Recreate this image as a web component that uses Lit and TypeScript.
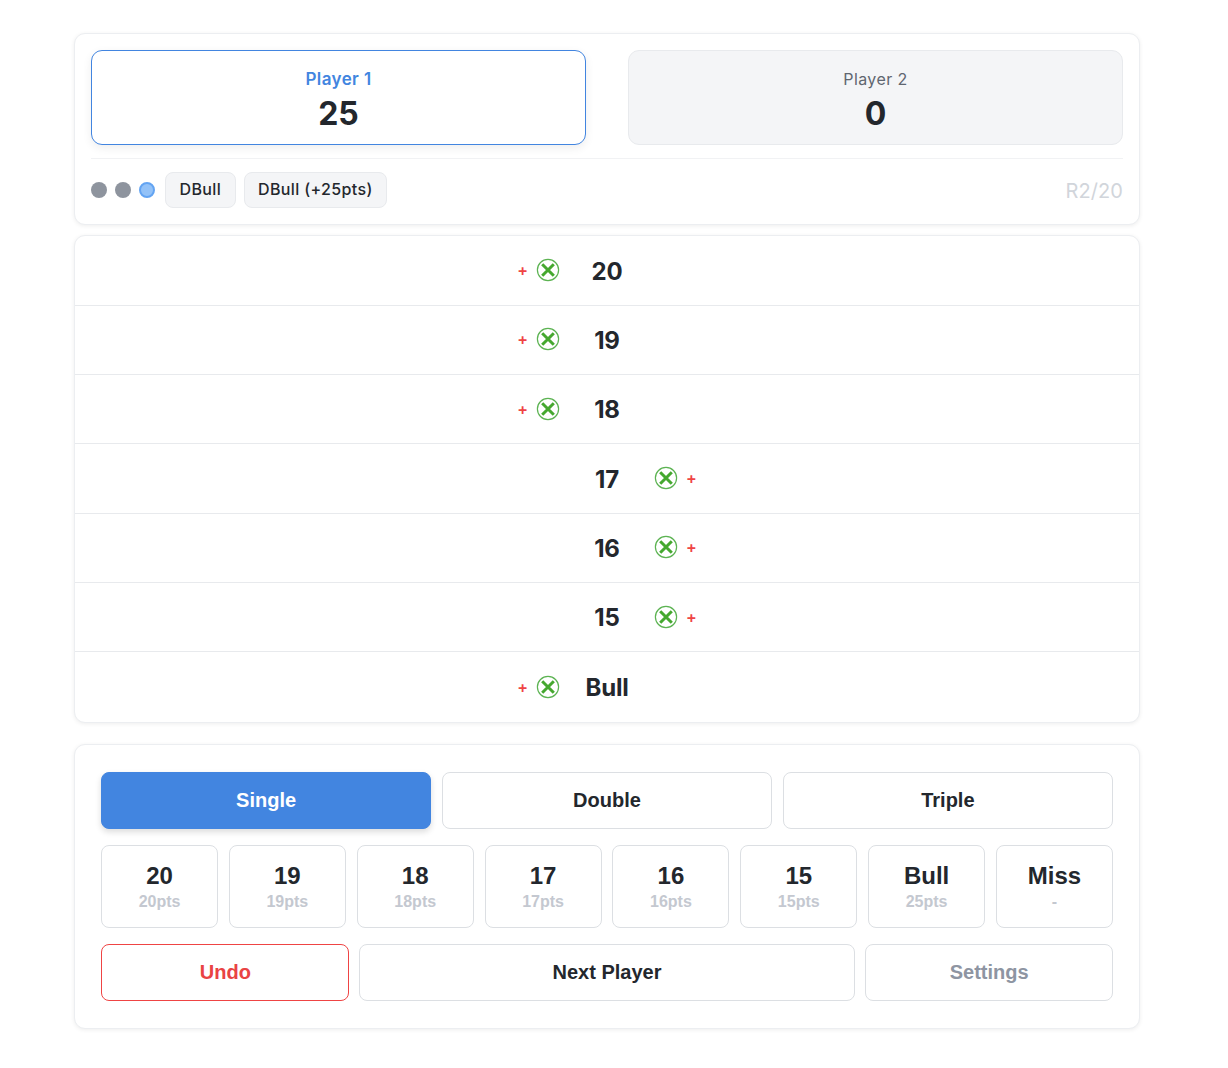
import { LitElement, html, css } from 'lit';
import { customElement } from 'lit/decorators.js';

const TARGETS = ['20', '19', '18', '17', '16', '15', 'Bull'];
// which side of the number the marks sit on
const LEFT_SIDE = ['20', '19', '18', 'Bull'];

const NUMBERS = [
  ['20', '20pts'],
  ['19', '19pts'],
  ['18', '18pts'],
  ['17', '17pts'],
  ['16', '16pts'],
  ['15', '15pts'],
  ['Bull', '25pts'],
  ['Miss', '-'],
];

const closedMark = html`
  <svg class="mark" viewBox="0 0 24 24" width="24" height="24">
    <circle cx="12" cy="12" r="10.6" fill="none" stroke="#5cb352" stroke-width="1.2"></circle>
    <path d="M6.2 6.2L17.8 17.8M17.8 6.2L6.2 17.8" fill="none" stroke="#45a82f" stroke-width="3"></path>
  </svg>
`;

@customElement('app-root')
export class AppRoot extends LitElement {
  static styles = css`
    :host {
      display: block;
      background: #fff;
      min-height: 1068px;
      box-sizing: border-box;
      padding: 33px 0 0 74px;
      font-family: Inter, 'Liberation Sans', sans-serif;
      color: #23272d;
    }
    .wrap {
      width: 1066px;
    }
    .card {
      box-sizing: border-box;
      background: #fff;
      border: 1px solid #eceef1;
      border-radius: 11px;
      box-shadow: 0 1px 4px rgba(0, 0, 0, 0.07);
    }
    .score-card {
      height: 192px;
      padding: 16px;
    }
    .players {
      display: grid;
      grid-template-columns: 1fr 1fr;
      column-gap: 42px;
      padding-bottom: 13px;
      border-bottom: 1px solid #f1f2f4;
    }
    .player {
      box-sizing: border-box;
      height: 95px;
      border: 1px solid #e8eaed;
      border-radius: 11px;
      background: #f4f5f7;
      display: flex;
      flex-direction: column;
      align-items: center;
      padding-top: 18px;
    }
    .player.active {
      background: #fff;
      border-color: #4285e0;
      box-shadow: 0 3px 10px rgba(0, 0, 0, 0.07);
    }
    .player .name {
      font-size: 16px;
      line-height: 20px;
      letter-spacing: 0.4px;
      color: #5f6670;
    }
    .player.active .name {
      color: #4285e0;
      font-size: 17px;
      font-weight: 600;
      line-height: 21px;
    }
    .player .score {
      font-size: 32px;
      line-height: 38px;
      font-weight: 700;
      color: #23272d;
      margin-top: 6px;
    }
    .player.active .score {
      margin-top: 5px;
    }
    .turn {
      display: flex;
      align-items: center;
      height: 36px;
      margin-top: 13px;
    }
    .dot {
      width: 16px;
      height: 16px;
      border-radius: 50%;
      background: #8e949e;
      margin-right: 8px;
    }
    .dot.current {
      box-sizing: border-box;
      background: #93c2f8;
      border: 2px solid #63a4f2;
      margin-right: 10px;
    }
    .chip {
      box-sizing: border-box;
      height: 36px;
      display: flex;
      align-items: center;
      padding: 0 13.5px 2px;
      margin-right: 8px;
      background: #f4f5f7;
      border: 1px solid #e8eaed;
      border-radius: 8px;
      font-size: 16px;
      font-weight: 500;
      letter-spacing: 0.36px;
      color: #23272d;
    }
    .round {
      margin-left: auto;
      font-size: 20px;
      letter-spacing: 0.1px;
      color: #d1d5db;
      padding-top: 2px;
    }
    .board {
      height: 488px;
      margin-top: 10px;
      padding-top: 0.4px;
      display: flex;
      flex-direction: column;
    }
    .row {
      box-sizing: border-box;
      height: 69.3px;
      flex: none;
      display: grid;
      grid-template-columns: 1fr 94px 1fr;
      align-items: center;
      border-bottom: 1px solid #e8eaed;
    }
    .row:last-child {
      flex: 1;
      border-bottom: none;
    }
    .side {
      display: flex;
      align-items: center;
      gap: 8px;
      margin-top: -1px;
    }
    .side.left {
      justify-content: flex-end;
    }
    .target {
      text-align: center;
      font-size: 24px;
      font-weight: 700;
      letter-spacing: -0.2px;
      color: #23272d;
      padding-top: 1.4px;
    }
    .plus {
      color: #ef4444;
      font-size: 16px;
      font-weight: 600;
      line-height: 20px;
    }
    .mark {
      display: block;
    }
    .pad {
      height: 285px;
      margin-top: 21px;
      padding: 27px 26px;
      font-family: 'Liberation Sans', Arial, sans-serif;
    }
    .modes {
      display: grid;
      grid-template-columns: repeat(3, 1fr);
      gap: 10.67px;
    }
    .numbers {
      display: grid;
      grid-template-columns: repeat(8, 1fr);
      gap: 10.8px;
      margin-top: 16px;
    }
    .actions {
      display: grid;
      grid-template-columns: 1fr 2fr 1fr;
      gap: 10.67px;
      margin-top: 16px;
    }
    button {
      box-sizing: border-box;
      font-family: inherit;
      background: #fff;
      border: 1px solid #dcdfe3;
      border-radius: 8px;
      padding: 0;
      color: #23272d;
      font-weight: 700;
      font-size: 20px;
    }
    .modes button,
    .actions button {
      height: 57px;
    }
    .modes button.on {
      background: #4285e0;
      border-color: #4285e0;
      color: #fff;
      box-shadow: 0 3px 6px rgba(0, 0, 0, 0.14);
    }
    .actions .undo {
      color: #e94343;
      border-color: #ef4444;
      padding-left: 1px;
    }
    .actions .settings {
      color: #8e95a2;
    }
    .num {
      height: 83px;
      display: flex;
      flex-direction: column;
      align-items: center;
      justify-content: center;
    }
    .num b {
      font-size: 24px;
      line-height: 28px;
      color: #23272d;
    }
    .num span {
      font-size: 16px;
      line-height: 20px;
      margin-top: 2px;
      color: #c4c8d0;
    }
  `;

  private renderSide(left: boolean) {
    return left
      ? html`<div class="side left"><span class="plus">+</span>${closedMark}</div>`
      : html`<div class="side">${closedMark}<span class="plus">+</span></div>`;
  }

  render() {
    return html`
      <div class="wrap">
        <section class="card score-card">
          <div class="players">
            <div class="player active">
              <div class="name">Player 1</div>
              <div class="score">25</div>
            </div>
            <div class="player">
              <div class="name">Player 2</div>
              <div class="score">0</div>
            </div>
          </div>
          <div class="turn">
            <div class="dot"></div>
            <div class="dot"></div>
            <div class="dot current"></div>
            <div class="chip">DBull</div>
            <div class="chip">DBull (+25pts)</div>
            <div class="round">R2/20</div>
          </div>
        </section>

        <section class="card board">
          ${TARGETS.map((t) => {
            const left = LEFT_SIDE.includes(t);
            return html`
              <div class="row">
                ${left ? this.renderSide(true) : html`<div></div>`}
                <div class="target">${t}</div>
                ${left ? html`<div></div>` : this.renderSide(false)}
              </div>
            `;
          })}
        </section>

        <section class="card pad">
          <div class="modes">
            <button class="on">Single</button>
            <button>Double</button>
            <button>Triple</button>
          </div>
          <div class="numbers">
            ${NUMBERS.map(
              ([label, pts]) => html`<button class="num"><b>${label}</b><span>${pts}</span></button>`
            )}
          </div>
          <div class="actions">
            <button class="undo">Undo</button>
            <button>Next Player</button>
            <button class="settings">Settings</button>
          </div>
        </section>
      </div>
    `;
  }
}
